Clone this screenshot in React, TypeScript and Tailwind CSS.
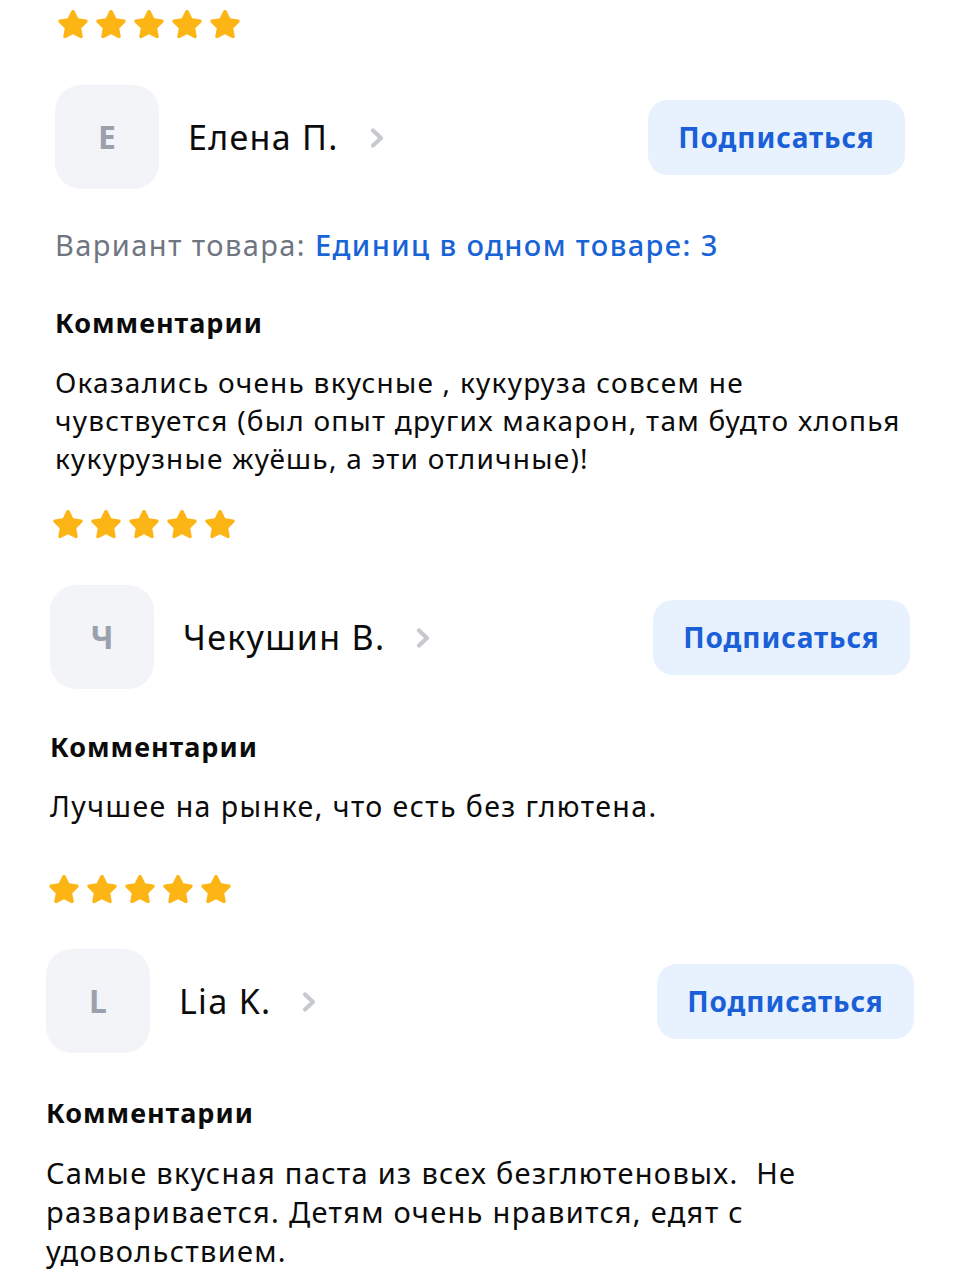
import React from 'react';

type Review = {
  letter: string;
  name: string;
  variant?: string;
  text: string[];
  wrap: string;
  starsGap: string;
  commentGap: string;
  body: string;
};

const reviews: Review[] = [
  {
    letter: 'E',
    name: 'Елена П.',
    variant: 'Единиц в одном товаре: 3',
    text: [
      'Оказались очень вкусные , кукуруза совсем не',
      'чувствуется (был опыт других макарон, там будто хлопья',
      'кукурузные жуёшь, а эти отличные)!',
    ],
    wrap: 'pl-[55px] pr-[55px] pt-[9px]',
    starsGap: 'mt-[45px]',
    commentGap: 'mt-[42px]',
    body: 'text-[28px] leading-[38px] tracking-[1.25px]',
  },
  {
    letter: 'Ч',
    name: 'Чекушин В.',
    text: ['Лучшее на рынке, что есть без глютена.'],
    wrap: 'pl-[50px] pr-[50px] pt-[32px]',
    starsGap: 'mt-[45px]',
    commentGap: 'mt-[40px]',
    body: 'text-[28.5px] leading-[38px] tracking-[1.45px]',
  },
  {
    letter: 'L',
    name: 'Lia K.',
    text: [
      'Самые вкусная паста из всех безглютеновых.  Не',
      'разваривается. Детям очень нравится, едят с',
      'удовольствием.',
    ],
    wrap: 'pl-[46px] pr-[46px] pt-[49px]',
    starsGap: 'mt-[44px]',
    commentGap: 'mt-[42px]',
    body: 'text-[29px] leading-[39px] tracking-[1.3px]',
  },
];

const Star = () => (
  <svg width="32" height="31" viewBox="1.6 1.6 20.8 20" className="shrink-0">
    <path
      d="M12 2.2c.5 0 .9.3 1.1.7l2.3 4.7 5.2.8c.9.1 1.3 1.2.6 1.9l-3.8 3.7.9 5.2c.2.9-.8 1.6-1.6 1.2L12 18l-4.7 2.4c-.8.4-1.8-.3-1.6-1.2l.9-5.2-3.8-3.7c-.7-.7-.3-1.8.6-1.9l5.2-.8 2.3-4.7c.2-.4.6-.7 1.1-.7z"
      fill="#FDB515"
    />
  </svg>
);

const Chevron = () => (
  <svg width="17" height="26" viewBox="0 0 17 26" className="ml-[30px] mt-[2px]">
    <path d="M4 5.5l8 7.5-8 7.5" fill="none" stroke="#C6C9CE" strokeWidth="4.2" strokeLinecap="round" strokeLinejoin="round" />
  </svg>
);

const ReviewBlock = ({ r }: { r: Review }) => (
  <div className={r.wrap}>
    <div className="flex gap-[6px] pl-[2px]">
      {[0, 1, 2, 3, 4].map((i) => (
        <Star key={i} />
      ))}
    </div>

    <div className={`${r.starsGap} flex items-center`}>
      <div className="w-[104px] h-[104px] rounded-[26px] bg-[#F2F4F8] flex items-center justify-center text-[32px] font-bold text-[#9BA1AC]">
        {r.letter}
      </div>
      <div className="ml-[29px] text-[34px] tracking-[1.3px] text-[#0B0B0B] leading-none">{r.name}</div>
      <Chevron />
      <button className="ml-auto w-[257px] h-[75px] rounded-[20px] bg-[#E7F2FE] text-[#1A5FD8] text-[28px] font-bold tracking-[0.9px]">
        Подписаться
      </button>
    </div>

    {r.variant && (
      <div className="mt-[38px] text-[29px] leading-[36px] tracking-[1.4px]">
        <span className="text-[#6F7681]">Вариант товара: </span>
        <span className="text-[#1863D6] font-medium">{r.variant}</span>
      </div>
    )}

    <div className={`${r.commentGap} text-[27px] font-bold leading-[36px] tracking-[1px] text-[#0B0B0B]`}>
      Комментарии
    </div>
    <div className={`mt-[22px] text-[#0B0B0B] ${r.body}`}>
      {r.text.map((t, i) => (
        <div key={i} className="whitespace-pre">
          {t}
        </div>
      ))}
    </div>
  </div>
);

export default function App() {
  return (
    <div className="w-[960px] h-[1280px] overflow-hidden bg-white font-['Noto_Sans','Open_Sans',sans-serif]">
      {reviews.map((r, i) => (
        <ReviewBlock key={i} r={r} />
      ))}
    </div>
  );
}
